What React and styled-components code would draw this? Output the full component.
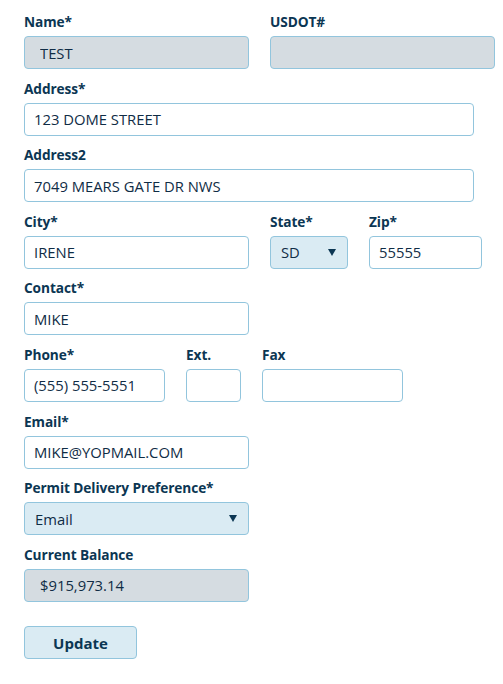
import styled, { createGlobalStyle } from 'styled-components';

const GlobalStyle = createGlobalStyle`
  html, body {
    margin: 0;
    padding: 0;
    background: #fff;
    font-family: "Open Sans", "Noto Sans", sans-serif;
  }
`;

const Form = styled.form`
  display: flex;
  flex-direction: column;
  align-items: flex-start;
  gap: 10.6px;
  padding: 13px 24px 24px 24px;
`;

const Row = styled.div`
  display: flex;
  gap: 21px;
`;

const Field = styled.div`
  display: flex;
  flex-direction: column;
  flex-shrink: 0;
  width: ${(p) => p.$w}px;
`;

const Label = styled.label`
  font-size: 13.7px;
  font-weight: 700;
  color: #0b3653;
  height: 18px;
  line-height: 18px;
  margin-bottom: 5px;
  letter-spacing: -0.1px;
  white-space: nowrap;
`;

const Input = styled.input`
  box-sizing: border-box;
  height: 33px;
  width: 100%;
  border: 1px solid #92c5dd;
  border-radius: 4px;
  background: ${(p) => (p.disabled ? '#d5dce1' : '#fff')};
  color: #0f2c45;
  font-family: inherit;
  font-size: 14.8px;
  padding: 0 ${(p) => (p.disabled ? 15 : 9)}px;
  outline: none;
  &:disabled {
    color: #0f2c45;
    -webkit-text-fill-color: #0f2c45;
  }
`;

const SelectBox = styled.div`
  box-sizing: border-box;
  height: 33px;
  width: 100%;
  border: 1px solid #92c5dd;
  border-radius: 4px;
  background: #daebf3;
  color: #0f2c45;
  font-size: 14.8px;
  display: flex;
  align-items: center;
  justify-content: space-between;
  padding: 0 11px 0 10px;
`;

const Caret = styled.span`
  width: 0;
  height: 0;
  border-left: 4.5px solid transparent;
  border-right: 4.5px solid transparent;
  border-top: 7px solid #0b3653;
`;

const Button = styled.button`
  margin-top: 14px;
  width: 113px;
  height: 33px;
  border: 1px solid #92c5dd;
  border-radius: 4px;
  background: #daebf3;
  color: #0b3653;
  font-family: inherit;
  font-size: 15px;
  font-weight: 700;
  cursor: pointer;
`;

function Select({ value }) {
  return (
    <SelectBox>
      <span>{value}</span>
      <Caret />
    </SelectBox>
  );
}

export default function App() {
  return (
    <>
      <GlobalStyle />
      <Form onSubmit={(e) => e.preventDefault()}>
        <Row>
          <Field $w={225}>
            <Label>Name*</Label>
            <Input disabled defaultValue="TEST" />
          </Field>
          <Field $w={225}>
            <Label>USDOT#</Label>
            <Input disabled defaultValue="" />
          </Field>
        </Row>
        <Field $w={450}>
          <Label>Address*</Label>
          <Input defaultValue="123 DOME STREET" />
        </Field>
        <Field $w={450}>
          <Label>Address2</Label>
          <Input defaultValue="7049 MEARS GATE DR NWS" />
        </Field>
        <Row>
          <Field $w={225}>
            <Label>City*</Label>
            <Input defaultValue="IRENE" />
          </Field>
          <Field $w={78}>
            <Label>State*</Label>
            <Select value="SD" />
          </Field>
          <Field $w={113}>
            <Label>Zip*</Label>
            <Input defaultValue="55555" />
          </Field>
        </Row>
        <Field $w={225}>
          <Label>Contact*</Label>
          <Input defaultValue="MIKE" />
        </Field>
        <Row>
          <Field $w={141}>
            <Label>Phone*</Label>
            <Input defaultValue="(555) 555-5551" />
          </Field>
          <Field $w={55}>
            <Label>Ext.</Label>
            <Input defaultValue="" />
          </Field>
          <Field $w={141}>
            <Label>Fax</Label>
            <Input defaultValue="" />
          </Field>
        </Row>
        <Field $w={225}>
          <Label>Email*</Label>
          <Input defaultValue="MIKE@YOPMAIL.COM" />
        </Field>
        <Field $w={225}>
          <Label>Permit Delivery Preference*</Label>
          <Select value="Email" />
        </Field>
        <Field $w={225}>
          <Label>Current Balance</Label>
          <Input disabled defaultValue="$915,973.14" />
        </Field>
        <Button type="submit">Update</Button>
      </Form>
    </>
  );
}
